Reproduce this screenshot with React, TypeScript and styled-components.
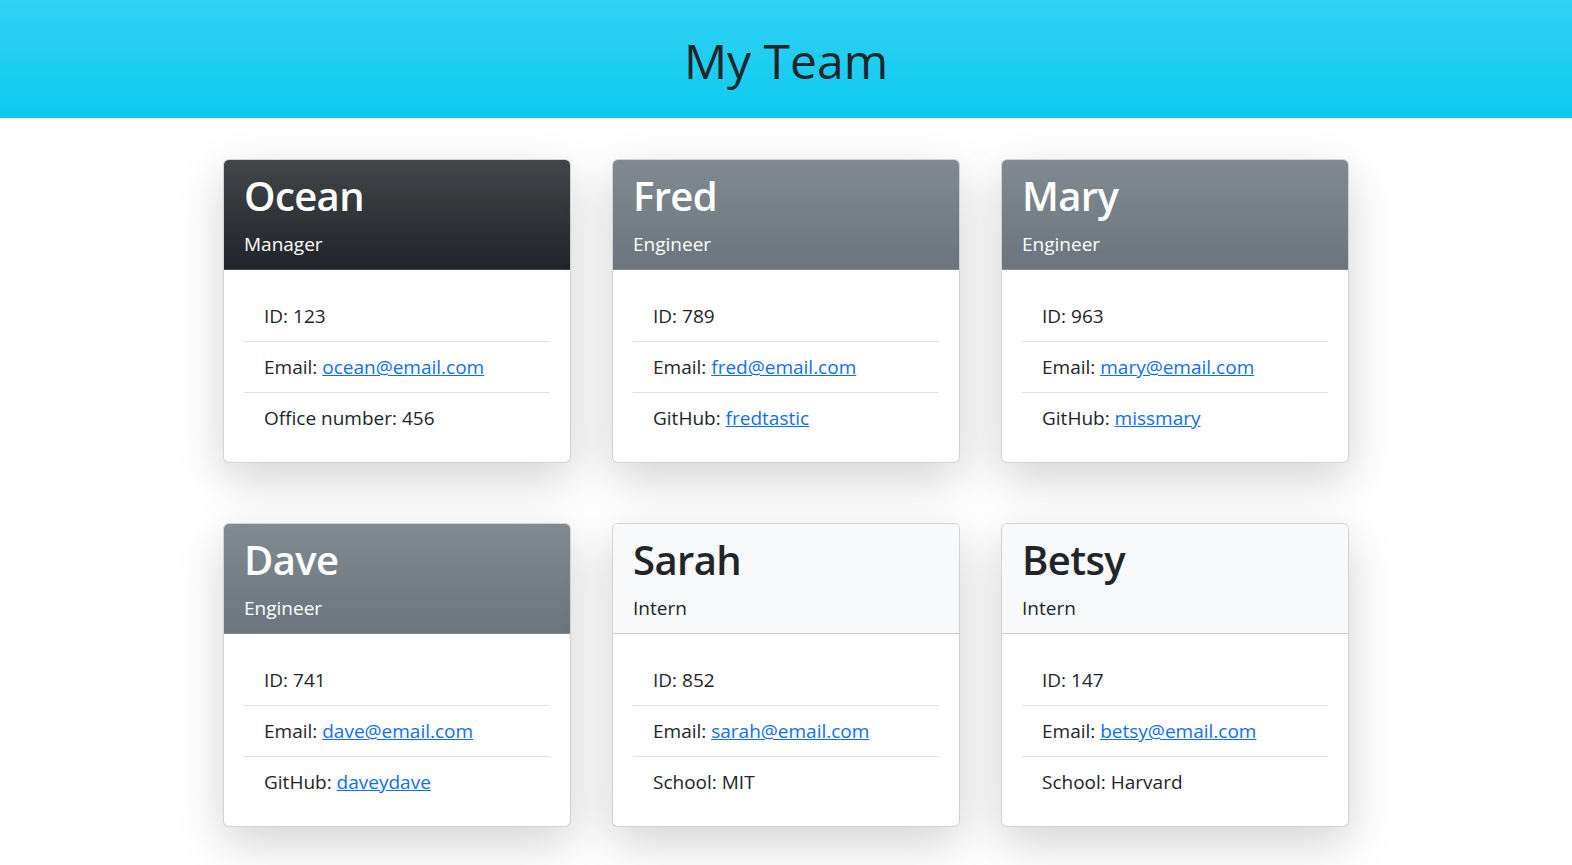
import React from 'react'
import styled, { createGlobalStyle } from 'styled-components'

const GlobalStyle = createGlobalStyle`
  * { box-sizing: border-box; }
  body {
    margin: 0;
    font-family: "Open Sans", "Noto Sans", sans-serif;
    color: #212529;
    background: #fff;
  }
`

type Member = {
  name: string
  role: 'Manager' | 'Engineer' | 'Intern'
  id: number
  email: string
  extraLabel: string
  extra: string
  link?: boolean
}

const team: Member[] = [
  { name: 'Ocean', role: 'Manager', id: 123, email: 'ocean@email.com', extraLabel: 'Office number', extra: '456' },
  { name: 'Fred', role: 'Engineer', id: 789, email: 'fred@email.com', extraLabel: 'GitHub', extra: 'fredtastic', link: true },
  { name: 'Mary', role: 'Engineer', id: 963, email: 'mary@email.com', extraLabel: 'GitHub', extra: 'missmary', link: true },
  { name: 'Dave', role: 'Engineer', id: 741, email: 'dave@email.com', extraLabel: 'GitHub', extra: 'daveydave', link: true },
  { name: 'Sarah', role: 'Intern', id: 852, email: 'sarah@email.com', extraLabel: 'School', extra: 'MIT' },
  { name: 'Betsy', role: 'Intern', id: 147, email: 'betsy@email.com', extraLabel: 'School', extra: 'Harvard' },
]

const tones = {
  Manager: { bg: '#212529', fg: '#fff', gradient: true },
  Engineer: { bg: '#6c757d', fg: '#fff', gradient: true },
  Intern: { bg: '#f8f9fa', fg: '#212529', gradient: false },
}

const App = () => {
  return (
    <>
      <GlobalStyle />
      <Banner>
        <Title>My Team</Title>
      </Banner>
      <Grid>
        {team.map((m) => {
          const tone = tones[m.role]
          return (
            <Card key={m.id}>
              <CardHeader $bg={tone.bg} $fg={tone.fg} $gradient={tone.gradient}>
                <Name>{m.name}</Name>
                <Role>{m.role}</Role>
              </CardHeader>
              <CardBody>
                <List>
                  <Item>ID: {m.id}</Item>
                  <Item>
                    Email: <Link href={`mailto:${m.email}`}>{m.email}</Link>
                  </Item>
                  <Item>
                    {m.extraLabel}:{' '}
                    {m.link ? <Link href={`https://github.com/${m.extra}`}>{m.extra}</Link> : m.extra}
                  </Item>
                </List>
              </CardBody>
            </Card>
          )
        })}
      </Grid>
    </>
  )
}

const Banner = styled.header`
  height: 118px;
  padding-top: 4px;
  display: flex;
  align-items: center;
  justify-content: center;
  background: #0dcaf0 linear-gradient(180deg, rgba(255, 255, 255, 0.15), rgba(255, 255, 255, 0));
`

const Title = styled.h1`
  margin: 0;
  font-size: 48px;
  font-weight: 500;
  line-height: 1.2;
  color: #212529;
`

const Grid = styled.main`
  display: grid;
  grid-template-columns: repeat(3, 348px);
  column-gap: 41px;
  row-gap: 60px;
  justify-content: center;
  padding: 41px 0 40px;
`

const Card = styled.div`
  display: flex;
  flex-direction: column;
  background: #fff;
  border: 1px solid rgba(0, 0, 0, 0.175);
  border-radius: 6px;
  box-shadow: 0 16px 48px rgba(0, 0, 0, 0.175);
  overflow: hidden;
`

const CardHeader = styled.div<{ $bg: string; $fg: string; $gradient: boolean }>`
  height: 110px;
  padding: 12px 20px 0;
  color: ${(p) => p.$fg};
  background-color: ${(p) => p.$bg};
  background-image: ${(p) =>
    p.$gradient ? 'linear-gradient(180deg, rgba(255, 255, 255, 0.15), rgba(255, 255, 255, 0))' : 'none'};
  border-bottom: 1px solid ${(p) => (p.$gradient ? 'transparent' : 'rgba(0, 0, 0, 0.175)')};
`

const Name = styled.h2`
  margin: 0 0 13px;
  font-size: 40px;
  font-weight: 600;
  line-height: 1.2;
  letter-spacing: -0.6px;
`

const Role = styled.h5`
  margin: 0;
  font-size: 19px;
  font-weight: 400;
  line-height: 1.2;
`

const CardBody = styled.div`
  padding: 21px 20px 19px;
`

const List = styled.ul`
  list-style: none;
  margin: 0;
  padding: 0;
`

const Item = styled.li`
  padding: 10px 20px;
  font-size: 19px;
  line-height: 30px;
  & + & {
    border-top: 1px solid #dee2e6;
  }
`

const Link = styled.a`
  color: #0d6efd;
  text-decoration: underline;
`

export default App
